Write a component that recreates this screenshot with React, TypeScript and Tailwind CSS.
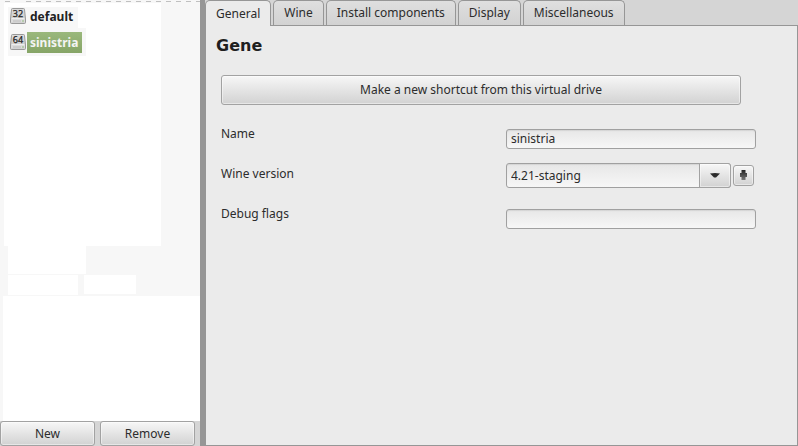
import { useState } from "react";

const TABS = ["General", "Wine", "Install components", "Display", "Miscellaneous"];

const BUTTON =
  "rounded-[3px] border border-[#a2a2a2] bg-linear-to-b from-[#f7f7f7] to-[#d2d2d2] shadow-[inset_0_0_0_1px_rgba(255,255,255,0.45)]";
const FIELD =
  "rounded-[3px] border border-[#a0a0a0] bg-linear-to-b from-[#e7e7e7] to-[#f7f7f7] px-1 text-xs text-[#2c2c2c] shadow-[inset_0_1px_1px_rgba(0,0,0,0.08)] outline-none";

function DriveIcon({ bits }: { bits: string }) {
  return (
    <svg width="16" height="16" viewBox="0 0 16 16" className="shrink-0" aria-hidden="true">
      <defs>
        <linearGradient id={`drive${bits}`} x1="0" y1="0" x2="0" y2="1">
          <stop offset="0" stopColor="#dcdcdc" />
          <stop offset="1" stopColor="#c8c8c8" />
        </linearGradient>
      </defs>
      <path d="M2.500 .5h11q1 0 1 1l1 9.500v3.500q0 1-1 1h-13q-1 0-1-1V11l1-9.500q0-1 1-1z" fill={`url(#drive${bits})`} stroke="#999999" />
      <path d="M1.500 10.500h13" stroke="#eeeeee" />
      <path d="M1 11h14v3.500H1z" fill="#dddddd" />
      <path d="M3 13h8" stroke="#bcbcbc" />
      <path d="M12 13h2" stroke="#8fb97c" />
      <text
        x="8"
        y="9"
        textAnchor="middle"
        fontSize="9"
        fontWeight="400"
        fontFamily="Noto Sans, sans-serif"
        fill="#222"
        stroke="#222"
        strokeWidth=".25"
      >
        {bits}
      </text>
    </svg>
  );
}

function DriveList() {
  return (
    <div className="flex flex-1 flex-col bg-[#f7f7f7]">
      <div className="flex h-[246px] flex-col">
        <div className="flex h-[3px] flex-col justify-center pl-[5px]">
          <div className="flex h-px gap-4">
            <div className="w-[5px] bg-[#c0c0c0]" />
            <div className="flex-1 bg-[repeating-linear-gradient(to_right,#c0c0c0_0_5px,transparent_5px_10px)]" />
          </div>
        </div>
        <ul className="ml-1 w-[157px] flex-1 bg-white pt-1 pl-1 text-xs font-bold">
          <li className="flex h-[21px] w-[70px] items-start bg-[#f7f7f7] pt-px pl-0.5">
            <DriveIcon bits="32" />
            <button className="ml-px pt-px pl-[3px] text-[#222222]">default</button>
          </li>
          <li className="flex h-7 w-[78px] items-center bg-[#f7f7f7] pl-0.5">
            <DriveIcon bits="64" />
            <button className="ml-px h-[21px] w-[55px] bg-linear-to-b from-[#9ab87c] to-[#86a567] pt-px pl-[3px] text-left text-[#f4f4f4]">
              sinistria
            </button>
          </li>
        </ul>
      </div>
      <div className="ml-2 h-7 w-[78px] bg-white" />
      <div className="mt-px ml-2 flex h-[21px] items-start gap-1.5">
        <div className="h-5 w-[70px] bg-white" />
        <div className="h-[19px] w-[52px] bg-white" />
      </div>
      <div className="ml-[3px] flex-1 bg-white" />
    </div>
  );
}

export default function App() {
  const [active, setActive] = useState("General");
  return (
    <div className="flex h-screen bg-[#d5d5d5] font-['Noto_Sans',sans-serif] text-xs text-[#2c2c2c]">
      <aside className="flex w-[200px] shrink-0 flex-col">
        <DriveList />
        <div className="flex gap-[5px] pr-[5px]">
          <button className={`h-[25px] flex-1 ${BUTTON}`}>New</button>
          <button className={`h-[25px] flex-1 ${BUTTON}`}>Remove</button>
        </div>
      </aside>
      <div className="w-[5px] shrink-0 bg-[#969696]" />
      <main className="flex min-w-0 flex-1 flex-col">
        <div className="flex h-[26px] shrink-0" role="tablist">
          {TABS.map((tab) =>
            tab === active ? (
              <button
                key={tab}
                role="tab"
                aria-selected="true"
                className="rounded-t-[5px] border border-b-0 border-[#969696] bg-[#ebebeb] px-2.5"
              >
                {tab}
              </button>
            ) : (
              <div key={tab} className="flex border-b border-[#969696] pl-0.5">
                <button
                  role="tab"
                  aria-selected="false"
                  onClick={() => setActive(tab)}
                  className="rounded-t-[5px] border border-b-0 border-[#969696] bg-linear-to-b from-[#dfdfdf] to-[#d2d2d2] px-2.5"
                >
                  {tab}
                </button>
              </div>
            )
          )}
          <div className="flex-1 border-b border-[#969696]" />
        </div>
        <section className="flex-1 border border-t-0 border-[#969696] bg-[#ebebeb] pr-14 pl-[15px]">
          <h1 className="-ml-[5px] pt-2 font-['DejaVu_Sans',sans-serif] text-base leading-6 font-bold text-[#1f1f1f]">Gene</h1>
          <button className={`mt-[17px] block h-[30px] w-[520px] max-w-full ${BUTTON}`}>
            Make a new shortcut from this virtual drive
          </button>
          <div className="mt-[18px] grid grid-cols-[285px_1fr] auto-rows-[40px]">
            <label htmlFor="name" className="pt-px leading-5">Name</label>
            <div className="pt-[6px]">
              <input id="name" defaultValue="sinistria" className={`block h-5 w-[250px] pb-0.5 leading-4 ${FIELD}`} />
            </div>
            <label htmlFor="version" className="pt-px leading-5">Wine version</label>
            <div className="flex items-start gap-0.5">
              <div className="relative w-[225px]">
                <select id="version" className={`block h-[25px] w-full appearance-none ${FIELD}`}>
                  <option>4.21-staging</option>
                </select>
                <span
                  className={`pointer-events-none absolute top-0 right-0 flex h-full w-8 items-center justify-center rounded-l-none ${BUTTON}`}
                >
                  <svg width="10" height="5" viewBox="0 0 10 5" aria-hidden="true">
                    <path d="M0 .5Q5-.5 10 .5L6 4.500H4z" fill="#2c2c2c" />
                  </svg>
                </span>
              </div>
              <button aria-label="Add" className={`mt-0.5 flex h-[21px] w-[21px] items-start justify-center pt-1 ${BUTTON}`}>
                <svg width="7" height="10" viewBox="0 0 7 10" aria-hidden="true">
                  <defs>
                    <linearGradient id="plus" x1="0" y1="0" x2="0" y2="1">
                      <stop offset="0" stopColor="#222" />
                      <stop offset="1" stopColor="#777" />
                    </linearGradient>
                  </defs>
                  <path d="M1.500 0h4v3H7v4H5.500v3h-4V7H0V3h1.500z" fill="url(#plus)" />
                </svg>
              </button>
            </div>
            <label htmlFor="flags" className="pt-px leading-5">Debug flags</label>
            <div className="pt-[6px]">
              <input id="flags" className={`block h-5 w-[250px] leading-4 ${FIELD}`} />
            </div>
          </div>
        </section>
      </main>
    </div>
  );
}
